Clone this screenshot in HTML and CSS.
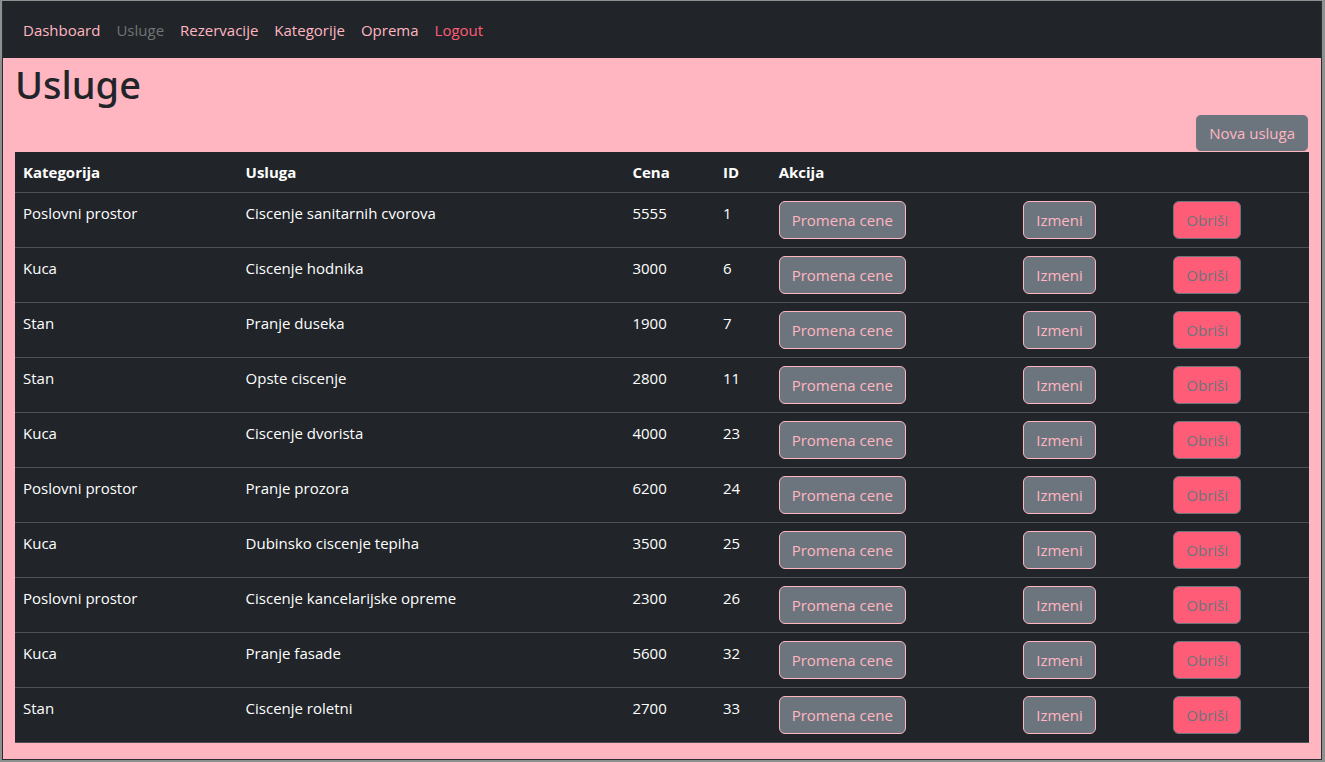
FILE: index.html
```
<!DOCTYPE html>
<html lang="sr">
<head>
<meta charset="utf-8">
<title>Usluge</title>
<link rel="stylesheet" href="styles.css">
</head>
<body>
<div class="window">
  <nav class="navbar">
    <a class="nav-link" href="#">Dashboard</a>
    <a class="nav-link active" href="#">Usluge</a>
    <a class="nav-link" href="#">Rezervacije</a>
    <a class="nav-link" href="#">Kategorije</a>
    <a class="nav-link" href="#">Oprema</a>
    <a class="nav-link logout" href="#">Logout</a>
  </nav>
  <main class="container">
    <h1 class="title">Usluge</h1>
    <div class="toolbar"><button class="btn" type="button">Nova usluga</button></div>
    <table class="table">
      <colgroup>
        <col class="col-category"><col class="col-service"><col class="col-price"><col class="col-id"><col class="col-action"><col class="col-edit"><col>
      </colgroup>
      <thead>
        <tr><th>Kategorija</th><th>Usluga</th><th>Cena</th><th>ID</th><th>Akcija</th><th></th><th></th></tr>
      </thead>
      <tbody>
        <tr><td>Poslovni prostor</td><td>Ciscenje sanitarnih cvorova</td><td>5555</td><td>1</td><td><button class="btn" type="button">Promena cene</button></td><td><button class="btn" type="button">Izmeni</button></td><td><button class="btn btn-delete" type="button">Obriši</button></td></tr>
        <tr><td>Kuca</td><td>Ciscenje hodnika</td><td>3000</td><td>6</td><td><button class="btn" type="button">Promena cene</button></td><td><button class="btn" type="button">Izmeni</button></td><td><button class="btn btn-delete" type="button">Obriši</button></td></tr>
        <tr><td>Stan</td><td>Pranje duseka</td><td>1900</td><td>7</td><td><button class="btn" type="button">Promena cene</button></td><td><button class="btn" type="button">Izmeni</button></td><td><button class="btn btn-delete" type="button">Obriši</button></td></tr>
        <tr><td>Stan</td><td>Opste ciscenje</td><td>2800</td><td>11</td><td><button class="btn" type="button">Promena cene</button></td><td><button class="btn" type="button">Izmeni</button></td><td><button class="btn btn-delete" type="button">Obriši</button></td></tr>
        <tr><td>Kuca</td><td>Ciscenje dvorista</td><td>4000</td><td>23</td><td><button class="btn" type="button">Promena cene</button></td><td><button class="btn" type="button">Izmeni</button></td><td><button class="btn btn-delete" type="button">Obriši</button></td></tr>
        <tr><td>Poslovni prostor</td><td>Pranje prozora</td><td>6200</td><td>24</td><td><button class="btn" type="button">Promena cene</button></td><td><button class="btn" type="button">Izmeni</button></td><td><button class="btn btn-delete" type="button">Obriši</button></td></tr>
        <tr><td>Kuca</td><td>Dubinsko ciscenje tepiha</td><td>3500</td><td>25</td><td><button class="btn" type="button">Promena cene</button></td><td><button class="btn" type="button">Izmeni</button></td><td><button class="btn btn-delete" type="button">Obriši</button></td></tr>
        <tr><td>Poslovni prostor</td><td>Ciscenje kancelarijske opreme</td><td>2300</td><td>26</td><td><button class="btn" type="button">Promena cene</button></td><td><button class="btn" type="button">Izmeni</button></td><td><button class="btn btn-delete" type="button">Obriši</button></td></tr>
        <tr><td>Kuca</td><td>Pranje fasade</td><td>5600</td><td>32</td><td><button class="btn" type="button">Promena cene</button></td><td><button class="btn" type="button">Izmeni</button></td><td><button class="btn btn-delete" type="button">Obriši</button></td></tr>
        <tr><td>Stan</td><td>Ciscenje roletni</td><td>2700</td><td>33</td><td><button class="btn" type="button">Promena cene</button></td><td><button class="btn" type="button">Izmeni</button></td><td><button class="btn btn-delete" type="button">Obriši</button></td></tr>
      </tbody>
    </table>
  </main>
</div>
</body>
</html>
```
FILE: styles.css
```
* {
  box-sizing: border-box;
}

body {
  margin: 0;
  padding: 1px 3px 2px 2px;
  background: #8b918f;
  color: #212529;
  font-family: "Segoe UI", "Open Sans", "Noto Sans", sans-serif;
  font-size: 15px;
  line-height: 24px;
}

.window {
  min-height: calc(100vh - 3px);
  border: 1px solid #2b2d30;
  border-top-width: 0;
  background: #ffb6c1;
}

.navbar {
  display: flex;
  flex-wrap: wrap;
  padding: 9px 12px 8px;
  background: #212529;
}

.nav-link {
  padding: 8px;
  color: #ffb6c1;
  text-decoration: none;
}

.navbar .nav-link.active {
  color: #6f7673;
}

.nav-link.logout {
  color: #ff5c77;
}

.container {
  padding: 0 12px 16px;
}

.title {
  margin: 0;
  padding: 2px 0 6px;
  font-family: "Segoe UI", "Noto Sans", sans-serif;
  font-size: 38px;
  font-weight: 500;
  line-height: 48px;
}

.toolbar {
  display: flex;
  justify-content: flex-end;
}

.btn {
  display: block;
  padding: 6px 12px;
  border: 1px solid #ffb6c1;
  border-radius: 6px;
  background: #6c757d;
  color: #ffb6c1;
  font: inherit;
  white-space: nowrap;
}

.toolbar .btn {
  padding: 6px 13px;
}

.btn-delete {
  border-color: #6c757d;
  background: #ff5c77;
  color: #6c757d;
}

.table {
  width: 100%;
  table-layout: fixed;
  border-collapse: separate;
  border-spacing: 0;
  background: #212529;
  color: #fff;
}

.table th,
.table td {
  padding: 8px;
  border-bottom: 1px solid #4d5154;
  text-align: left;
  vertical-align: top;
}

.table th {
  font-weight: 700;
}

.col-category {
  width: 17.2%;
}

.col-service {
  width: 29.9%;
}

.col-price {
  width: 7%;
}

.col-id {
  width: 4.3%;
}

.col-action {
  width: 18.9%;
}

.col-edit {
  width: 11.6%;
}
```
